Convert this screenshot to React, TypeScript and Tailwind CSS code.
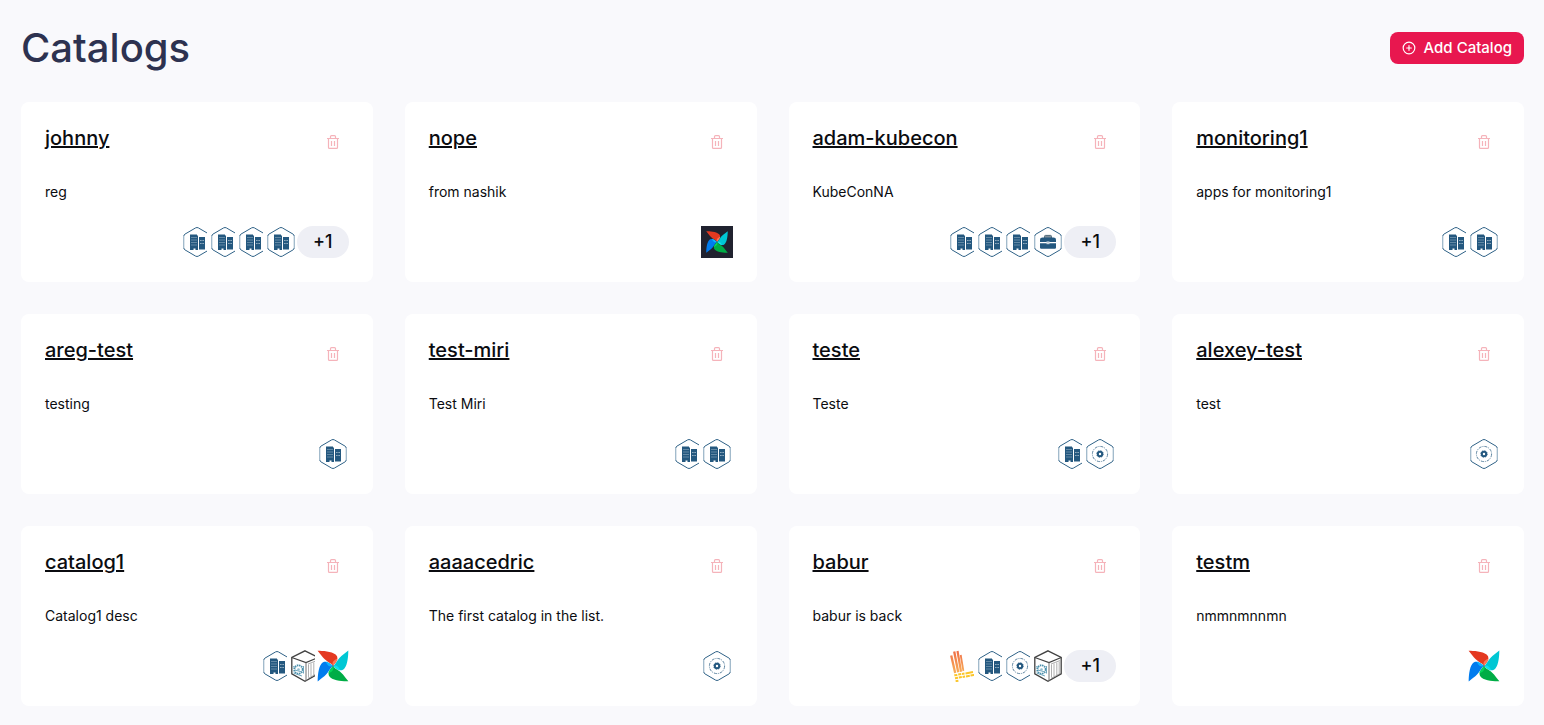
import { CirclePlus } from "lucide-react";

type IconName = "building" | "briefcase" | "gear" | "airflow" | "airflowDark" | "container" | "loki";

type Catalog = {
  name: string;
  description: string;
  icons: IconName[];
  extra?: number;
};

const catalogs: Catalog[] = [
  { name: "johnny", description: "reg", icons: ["building", "building", "building", "building"], extra: 1 },
  { name: "nope", description: "from nashik", icons: ["airflowDark"] },
  { name: "adam-kubecon", description: "KubeConNA", icons: ["building", "building", "building", "briefcase"], extra: 1 },
  { name: "monitoring1", description: "apps for monitoring1", icons: ["building", "building"] },
  { name: "areg-test", description: "testing", icons: ["building"] },
  { name: "test-miri", description: "Test Miri", icons: ["building", "building"] },
  { name: "teste", description: "Teste", icons: ["building", "gear"] },
  { name: "alexey-test", description: "test", icons: ["gear"] },
  { name: "catalog1", description: "Catalog1 desc", icons: ["building", "container", "airflow"] },
  { name: "aaaacedric", description: "The first catalog in the list.", icons: ["gear"] },
  { name: "babur", description: "babur is back", icons: ["loki", "building", "gear", "container"], extra: 1 },
  { name: "testm", description: "nmmnmnnmn", icons: ["airflow"] },
];

function Hexagon() {
  return (
    <>
      <path d="M2.7 10.2v11.6M29.3 10.2v11.6" stroke="#9fb8ca" strokeWidth="1.3" fill="none" />
      <path
        d="M2.8 10.2Q2.8 8.8 4 8.1L14.6 1.9Q16 1.1 17.4 1.9L28 8.1Q29.2 8.8 29.2 10.2M2.8 21.8Q2.8 23.2 4 23.9L14.6 30.1Q16 30.9 17.4 30.1L28 23.9Q29.2 23.2 29.2 21.8"
        stroke="#2f6287"
        strokeWidth="1"
        fill="none"
      />
    </>
  );
}

function Building() {
  return (
    <>
      <Hexagon />
      <path d="M9 8.5h7v.9h1v14.6h-2.5v-1.4h-2v1.4H9z" fill="#24587f" />
      <path d="M18 11h6v12.5h-6z" fill="#24587f" />
      <path d="M10 11.5h6M10 14h6M10 16.5h6M10 19h6" stroke="#8eabc0" strokeWidth="0.6" />
      <path
        d="M19.4 14.5h1M21.6 14.5h1M19.4 17.5h1M21.6 17.5h1"
        stroke="#d5e0e8"
        strokeWidth="1"
      />
    </>
  );
}

function Briefcase() {
  return (
    <>
      <Hexagon />
      <path d="M12.5 12V10.4Q12.5 9.4 13.5 9.4h5Q19.5 9.4 19.5 10.4V12" fill="#7f8f9b" stroke="#4f6878" strokeWidth="1" />
      <path d="M8 16.1V13.5Q8 11.5 10.5 11.5h11Q24 11.5 24 13.5V16.1z" fill="#24587f" />
      <path d="M8 17.2h16v4.5Q24 22.8 22.8 22.8H9.2Q8 22.8 8 21.7z" fill="#24587f" />
      <path d="M14.5 15.4h3v2.8h-3z" fill="#c5d3dd" />
    </>
  );
}

function Gear() {
  return (
    <>
      <Hexagon />
      <circle cx="16" cy="16" r="7.6" fill="none" stroke="#5f86a2" strokeWidth="1" strokeDasharray="3 1 1 1" />
      <circle cx="16" cy="16" r="2.2" fill="none" stroke="#24587f" strokeWidth="2" />
      <circle cx="16" cy="16" r="3.3" fill="none" stroke="#24587f" strokeWidth="0.8" strokeDasharray="1.3 1.3" />
    </>
  );
}

const blades = [
  { color: "#e43921", tip: "#ff7557", angle: 0 },
  { color: "#00c7d4", tip: "#11e1ee", angle: 90 },
  { color: "#00ad46", tip: "#04d659", angle: 180 },
  { color: "#017cee", tip: "#0cb6ff", angle: 270 },
];

function Pinwheel() {
  return (
    <>
      {blades.map(({ color, tip, angle }) => (
        <g key={color} transform={`rotate(${angle} 16 16)`}>
          <path d="M16 16C14.8 13.4 9.8 12 6 7.6Q3 3.600 .6 .7C5.500 .7 14.500 1.200 18.600 4.600C21.200 6.800 21.400 10 16 16z" fill={color} />
          <path d="M16 16C14.800 13.400 15.500 10.800 20.600 8.600C20.700 10.500 18.500 13.200 16 16z" fill={tip} />
        </g>
      ))}
      <circle cx="16" cy="16" r="0.7" fill="#51504f" />
    </>
  );
}

function Container() {
  return (
    <>
      <path d="M16 .8L29.2 7.4V23.8L16 31.2L2.8 23.8V7.4z" fill="#ffffff" stroke="#414141" strokeWidth="1.3" />
      <path d="M2.8 7.4L17 12.6L29.2 7.4" fill="none" stroke="#414141" strokeWidth="1.1" />
      <path d="M17 12.6V31" stroke="#707070" strokeWidth="1" />
      <path d="M19.5 14.5V27.5M22 13.5V26.5M24.8 12.5V25M27.2 11.5V23.5" stroke="#b0b0b0" strokeWidth="1" />
      <path d="M19 14L28 10.5M19 28.5L28 23.5" stroke="#8c8c8c" strokeWidth="0.7" />
      <circle cx="9.5" cy="19.5" r="4.2" fill="none" stroke="#4b8fab" strokeWidth="1.9" strokeDasharray="1.5 0.7" />
      <path d="M4 16.5l2.5 1M4.5 23l8.5 3M6 20l7 2M14.5 16v7.5" stroke="#6fa7be" strokeWidth="1" />
      <circle cx="9.5" cy="19.5" r="1.3" fill="#91bccd" />
    </>
  );
}

function Loki() {
  return (
    <>
      <defs>
        <linearGradient id="loki" x1="0" y1="0" x2="0" y2="32" gradientUnits="userSpaceOnUse">
          <stop offset="0" stopColor="#ef6b45" />
          <stop offset="0.7" stopColor="#f8ad58" />
          <stop offset="1" stopColor="#fbc62b" />
        </linearGradient>
      </defs>
      <g stroke="url(#loki)" fill="none">
        <path d="M3.2 5.5L7.2 23" strokeWidth="2.3" />
        <path d="M6.2 1.5L10.2 22.3" strokeWidth="2.3" />
        <path d="M9.5 1L13 21.8" strokeWidth="2.2" />
        <path d="M12.7 5L15.4 21" strokeWidth="1.8" />
      </g>
      <g stroke="#fbc62b" strokeWidth="2" fill="none">
        <path d="M6.3 25.3l3-.4M10.2 24.6l3-.5M14 24l2.5-.4M17.5 23.4l7.5-1.3" />
        <path d="M7 28.3l3-.5M10.8 27.6l3-.5M14.6 27l2.5-.4M18 26.4l3.8-.7M22.5 25.6l4.700-.9" />
        <path d="M7.6 31.2l2.800-.5" />
      </g>
    </>
  );
}

const drawings: Record<IconName, () => React.JSX.Element> = {
  building: Building,
  briefcase: Briefcase,
  gear: Gear,
  airflow: Pinwheel,
  airflowDark: () => (
    <>
      <path d="M0 0h32v32H0z" fill="#20222f" />
      <g transform="translate(4.8 4.8) scale(0.7)">
        <Pinwheel />
      </g>
    </>
  ),
  container: Container,
  loki: Loki,
};

function AppIcon({ name }: { name: IconName }) {
  const Drawing = drawings[name];
  return (
    <svg viewBox="0 0 32 32" className="size-8 bg-white ring-2 ring-white" aria-hidden="true">
      <Drawing />
    </svg>
  );
}

function TrashIcon() {
  return (
    <svg viewBox="0 0 12 14" className="h-3.5 w-3" fill="none" stroke="#f5b3ba" strokeWidth="1.2" aria-hidden="true">
      <path d="M0 3.5h12M3.5 3.5V1.5Q3.5 .6 4.5 .6h3Q8.5 .6 8.5 1.5V3.5" />
      <path d="M1.5 3.5V12.4Q1.5 13.4 2.5 13.4h7Q10.5 13.4 10.5 12.4V3.5" />
      <path d="M4.5 6v5M7.5 6v5" />
    </svg>
  );
}

function CatalogCard({ catalog }: { catalog: Catalog }) {
  return (
    <li className="flex flex-col gap-6 rounded-lg bg-white p-6">
      <div className="flex items-start justify-between">
        <h2 className="text-xl leading-6 font-medium">
          <a href="#" className="underline">
            {catalog.name}
          </a>
        </h2>
        <button type="button" aria-label={`Delete ${catalog.name}`} className="flex size-8 items-center justify-center">
          <TrashIcon />
        </button>
      </div>
      <p className="text-sm leading-5">{catalog.description}</p>
      <div className="flex h-8 items-center justify-end">
        <div className="flex -space-x-1">
          {catalog.icons.map((icon, index) => (
            <AppIcon key={index} name={icon} />
          ))}
        </div>
        {catalog.extra ? (
          <span className="relative flex h-8 w-13 items-center justify-center rounded-full bg-[#eeeff5] text-lg font-medium">
            +{catalog.extra}
          </span>
        ) : null}
      </div>
    </li>
  );
}

export default function App() {
  return (
    <main className="min-h-screen bg-[#f9f9fc] pt-6 pr-5 pb-5 pl-[21px] font-['Inter',sans-serif] text-[#0b0c10]">
      <header className="flex items-center justify-between">
        <h1 className="text-[40px] leading-12 font-medium text-[#2d3250]">Catalogs</h1>
        <button
          type="button"
          className="flex h-8 items-center gap-2 rounded-lg bg-[#e8174f] px-3 text-[15px] font-medium text-white"
        >
          <CirclePlus size={14} strokeWidth={2} aria-hidden="true" />
          Add Catalog
        </button>
      </header>
      <ul className="mt-[30px] grid grid-cols-4 gap-8">
        {catalogs.map((catalog) => (
          <CatalogCard key={catalog.name} catalog={catalog} />
        ))}
      </ul>
    </main>
  );
}
